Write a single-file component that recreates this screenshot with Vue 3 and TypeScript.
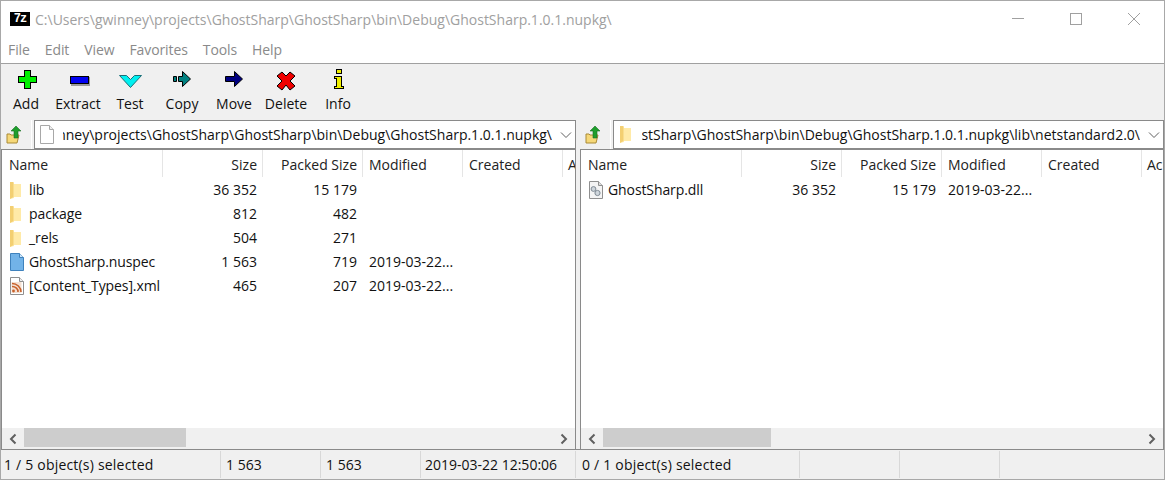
<script setup lang="ts">
interface Row {
  name: string
  icon: 'folder' | 'spec' | 'xml' | 'dll'
  size: string
  packed: string
  modified: string
}

interface Pane {
  id: string
  path: string
  pathIcon: 'page' | 'folder'
  rows: Row[]
  cut: string
}

const menus = ['File', 'Edit', 'View', 'Favorites', 'Tools', 'Help']
const tools = ['Add', 'Extract', 'Test', 'Copy', 'Move', 'Delete', 'Info']

const base = 'C:\\Users\\gwinney\\projects\\GhostSharp\\GhostSharp\\bin\\Debug\\GhostSharp.1.0.1.nupkg\\'

const panes: Pane[] = [
  {
    id: 'left',
    path: base,
    pathIcon: 'page',
    cut: 'A',
    rows: [
      { name: 'lib', icon: 'folder', size: '36 352', packed: '15 179', modified: '' },
      { name: 'package', icon: 'folder', size: '812', packed: '482', modified: '' },
      { name: '_rels', icon: 'folder', size: '504', packed: '271', modified: '' },
      { name: 'GhostSharp.nuspec', icon: 'spec', size: '1 563', packed: '719', modified: '2019-03-22...' },
      { name: '[Content_Types].xml', icon: 'xml', size: '465', packed: '207', modified: '2019-03-22...' },
    ],
  },
  {
    id: 'right',
    path: base + 'lib\\netstandard2.0\\',
    pathIcon: 'folder',
    cut: 'Ac',
    rows: [
      { name: 'GhostSharp.dll', icon: 'dll', size: '36 352', packed: '15 179', modified: '2019-03-22...' },
    ],
  },
]

const statusCells = [
  { text: '1 / 5 object(s) selected', width: 221 },
  { text: '1 563', width: 100 },
  { text: '1 563', width: 100 },
  { text: '2019-03-22 12:50:06', width: 155 },
  { text: '0 / 1 object(s) selected', width: 224 },
  { text: '', width: 100 },
  { text: '', width: 100 },
  { text: '', width: 165 },
]
</script>

<template>
  <div class="win">
    <div class="title">
      <span class="logo">7z</span>
      <span class="title-text">{{ base }}</span>
      <div class="caption">
        <svg width="12" height="12" viewBox="0 0 12 12"><path d="M0 5.500h12" stroke="#a0a0a0" fill="none" /></svg>
        <svg width="12" height="12" viewBox="0 0 12 12"><rect x=".5" y=".5" width="11" height="11" stroke="#a0a0a0" fill="none" /></svg>
        <svg width="12" height="12" viewBox="0 0 12 12"><path d="M0 0l12 12M12 0L0 12" stroke="#a0a0a0" fill="none" /></svg>
      </div>
    </div>

    <nav class="menu">
      <span v-for="m in menus" :key="m">{{ m }}</span>
    </nav>

    <div class="toolbar">
      <div v-for="t in tools" :key="t" class="tool">
        <svg width="24" height="24" viewBox="0 0 24 24" shape-rendering="crispEdges">
          <template v-if="t === 'Add'">
            <path d="M11 4h6v6h6v6h-6v6h-6v-6H5v-6h6z" fill="#9a9a9a" />
            <path d="M10.500 3.500h6v6h6v6h-6v6h-6v-6h-6v-6h6z" fill="#00f000" stroke="#000" />
          </template>
          <template v-else-if="t === 'Extract'">
            <rect x="5" y="10" width="19" height="9" fill="#9a9a9a" />
            <rect x="4.500" y="9.500" width="18" height="7" fill="#0000f0" stroke="#000" />
          </template>
          <template v-else-if="t === 'Test'">
            <path d="M1.500 8.500h7l4 4 4-4h7l-11 12z" fill="#00f0f0" stroke="#1c6f78" shape-rendering="auto" />
          </template>
          <template v-else-if="t === 'Copy'">
            <path d="M3.500 9.500h3v5h-3zM8.500 9.500h4v-5l8 7.500-8 7.500v-5h-4z" fill="#008080" stroke="#000" shape-rendering="auto" />
          </template>
          <template v-else-if="t === 'Move'">
            <path d="M3.500 9.500h9v-5l8 7.500-8 7.500v-5h-9z" fill="#000080" stroke="#000" shape-rendering="auto" />
          </template>
          <template v-else-if="t === 'Delete'">
            <path d="M8 5l4 4 4-4 5 4-5 5 5 5-5 4-4-5-4 5-5-4 5-5-5-5z" fill="#f00000" stroke="#000" shape-rendering="auto" />
          </template>
          <template v-else>
            <rect x="10.500" y="2.500" width="5" height="4" fill="#f0f000" stroke="#000" />
            <path d="M8.500 9.500h7v10h2v2h-9v-2h2v-8h-2z" fill="#f0f000" stroke="#000" />
          </template>
        </svg>
        <span>{{ t }}</span>
      </div>
    </div>

    <div class="panes">
      <section v-for="p in panes" :key="p.id" class="pane" :class="p.id">
        <div class="addr">
          <div class="up">
            <svg width="18" height="20" viewBox="0 0 18 20">
              <path d="M2 9h3l1 1h8l-2 8H2z" fill="#f6d878" stroke="#a98a36" />
              <path d="M9 13V6H6l5-5 5 5h-3v7z" fill="#1f9e2c" stroke="#1b6e24" stroke-width=".6" />
            </svg>
          </div>
          <div class="combo">
            <svg v-if="p.pathIcon === 'page'" class="combo-ico" width="14" height="19" viewBox="0 0 14 19">
              <path d="M.5.500h9l4 4v14H.5z" fill="#fff" stroke="#a8a8a8" />
              <path d="M9.500.500v4h4" fill="#eee" stroke="#a8a8a8" />
            </svg>
            <svg v-else class="combo-ico" width="14" height="19" viewBox="0 0 14 19">
              <path d="M1 1h3l1 2h7v13H5v1l-4 1z" fill="#ffeaa8" />
              <path d="M1 1h3.500v15L1 18z" fill="#f3cf72" />
            </svg>
            <div class="combo-text"><span>{{ p.path }}</span></div>
            <svg class="chev" width="12" height="8" viewBox="0 0 12 8"><path d="M1 1.500l5 5 5-5" stroke="#606060" fill="none" /></svg>
          </div>
        </div>

        <div class="list">
          <div class="head row">
            <div class="c name">Name</div>
            <div class="c num">Size</div>
            <div class="c num">Packed Size</div>
            <div class="c date">Modified</div>
            <div class="c date">Created</div>
            <div class="c cut">{{ p.cut }}</div>
          </div>
          <div class="body">
            <div v-for="r in p.rows" :key="r.name" class="row item">
              <div class="c name">
                <svg class="ico" width="16" height="18" viewBox="0 0 16 18">
                  <template v-if="r.icon === 'folder'">
                    <path d="M1 1h3l1 2h7v13H5v1l-4 1z" fill="#ffeaa8" />
                    <path d="M1 1h3.500v15L1 18z" fill="#f3cf72" />
                  </template>
                  <template v-else-if="r.icon === 'spec'">
                    <path d="M1.500.500h9l4 4v13h-13z" fill="#72b3e8" stroke="#3f82bd" />
                    <path d="M10.500.500v4h4" fill="#cfe6f8" stroke="#3f82bd" />
                  </template>
                  <template v-else-if="r.icon === 'xml'">
                    <path d="M1.500.500h9l4 4v13h-13z" fill="#fff" stroke="#8f8f8f" />
                    <path d="M10.500.500v4h4" fill="#eee" stroke="#8f8f8f" />
                    <rect x="2.500" y="5" width="10" height="11" fill="#f3e0d2" />
                    <circle cx="4.500" cy="14" r="1.400" fill="#c8602a" />
                    <path d="M3 9.500a6 5 0 0 1 6 5.500M3 6.500a9 8.500 0 0 1 9 8.500" fill="none" stroke="#c8602a" stroke-width="1.600" />
                  </template>
                  <template v-else>
                    <path d="M1.500.500h9l4 4v13h-13z" fill="#f4f4f4" stroke="#8f8f8f" />
                    <path d="M10.500.500v4h4" fill="#ddd" stroke="#8f8f8f" />
                    <circle cx="5.500" cy="8" r="2.400" fill="#cfd6dc" stroke="#7f8a94" />
                    <circle cx="9.500" cy="12" r="2.600" fill="#cfd6dc" stroke="#7f8a94" />
                  </template>
                </svg>
                <span>{{ r.name }}</span>
              </div>
              <div class="c num">{{ r.size }}</div>
              <div class="c num">{{ r.packed }}</div>
              <div class="c date">{{ r.modified }}</div>
              <div class="c date"></div>
              <div class="c cut"></div>
            </div>
          </div>
          <div class="hbar">
            <svg class="arr" width="10" height="12" viewBox="0 0 10 12"><path d="M7.500 1.500L3 6l4.500 4.500" stroke="#606060" stroke-width="2" fill="none" /></svg>
            <div class="thumb"></div>
            <svg class="arr" width="10" height="12" viewBox="0 0 10 12"><path d="M2.500 1.500L7 6l-4.500 4.500" stroke="#606060" stroke-width="2" fill="none" /></svg>
          </div>
        </div>
      </section>
    </div>

    <footer class="status">
      <div v-for="(s, i) in statusCells" :key="i" class="cell" :style="{ width: s.width + 'px' }">{{ s.text }}</div>
    </footer>
  </div>
</template>

<style scoped>
.win {
  width: 1165px;
  height: 480px;
  box-sizing: border-box;
  border: 1px solid #a8a8a8;
  background: #fff;
  display: flex;
  flex-direction: column;
  font-family: "Open Sans", "Noto Sans", sans-serif;
  font-size: 14px;
  color: #111;
  overflow: hidden;
}
.title {
  height: 29px;
  box-sizing: border-box;
  display: flex;
  align-items: center;
  padding-left: 9px;
  padding-top: 7px;
  flex: none;
}
.logo {
  width: 20px;
  height: 14px;
  background: #000;
  color: #fff;
  font: bold 12px/14px "Liberation Mono", monospace;
  text-align: center;
  letter-spacing: -1px;
  margin-right: 5px;
}
.title-text {
  color: #a0a0a0;
}
.caption {
  margin-left: auto;
  display: flex;
  gap: 46px;
  padding-right: 24px;
}
.menu {
  height: 34px;
  flex: none;
  display: flex;
  align-items: center;
  gap: 15px;
  padding: 6px 0 0 7px;
  box-sizing: border-box;
  color: #8a8a8a;
  letter-spacing: -.1px;
  border-bottom: 1px solid #a0a0a0;
}
.toolbar {
  height: 56px;
  flex: none;
  background: #f0f0f0;
  display: flex;
  margin-left: -1px;
}
.tool {
  width: 52px;
  display: flex;
  flex-direction: column;
  align-items: center;
  padding-top: 3px;
  line-height: 20px;
}
.tool svg {
  display: block;
  height: 24px;
  margin-bottom: 3px;
}
.panes {
  flex: 1;
  display: flex;
  gap: 4px;
  min-height: 0;
  background: #f0f0f0;
}
.pane {
  display: flex;
  flex-direction: column;
  min-width: 0;
}
.pane.left { width: 575px; }
.pane.right { width: 584px; }
.addr {
  height: 29px;
  flex: none;
  display: flex;
  gap: 2px;
}
.up {
  width: 31px;
  display: flex;
  align-items: center;
  justify-content: center;
  border-right: 1px solid #fff;
  padding-right: 5px;
  box-sizing: border-box;
}
.combo {
  flex: 1;
  min-width: 0;
  background: #fff;
  border: 1px solid #8a8a8a;
  display: flex;
  align-items: center;
  padding-left: 5px;
}
.combo-ico { flex: none; }
.combo-text {
  flex: 1;
  min-width: 0;
  margin: 0 8px 0 9px;
  overflow: hidden;
  display: flex;
  justify-content: flex-end;
  white-space: nowrap;
}
.chev {
  flex: none;
  margin-right: 3px;
}
.list {
  flex: 1;
  min-height: 0;
  display: flex;
  flex-direction: column;
  background: #fff;
  border: 1px solid #8a8a8a;
  border-bottom: 0;
}
.row {
  display: flex;
  white-space: nowrap;
}
.head {
  height: 28px;
  flex: none;
  color: #222;
}
.head .c {
  height: 27px;
  border-right: 1px solid #e5e5e5;
  line-height: 29px;
}
.head .cut { border-right: 0; }
.c {
  box-sizing: border-box;
  width: 100px;
  flex: none;
  overflow: hidden;
}
.c.name {
  width: 161px;
  padding-left: 7px;
}
.c.num {
  text-align: right;
  padding-right: 5px;
}
.item .c.num { padding-right: 6px; }
.c.date { padding-left: 6px; }
.c.cut {
  width: 13px;
  padding-left: 5px;
  flex: 1;
}
.body {
  flex: 1;
  min-height: 0;
  overflow: hidden;
}
.item {
  height: 24px;
  line-height: 24px;
}
.item .c.name {
  display: flex;
  align-items: center;
  gap: 4px;
  letter-spacing: -.1px;
}
.ico { flex: none; }
.hbar {
  height: 21px;
  flex: none;
  background: #f0f0f0;
  display: flex;
  align-items: center;
}
.arr {
  flex: none;
  margin: 0 6px;
}
.arr:last-child { margin-left: auto; }
.thumb {
  height: 19px;
  align-self: flex-start;
  background: #cdcdcd;
}
.left .thumb { width: 162px; }
.right .thumb { width: 168px; }
.status {
  height: 30px;
  flex: none;
  display: flex;
  background: #f0f0f0;
  border-top: 1px solid #8a8a8a;
  margin-left: -1px;
  box-sizing: border-box;
}
.cell {
  box-sizing: border-box;
  flex: none;
  padding-left: 5px;
  line-height: 28px;
  border-right: 1px solid #d8d8d8;
  margin: 1px 0;
  white-space: nowrap;
  overflow: hidden;
}
.cell:first-child {
  padding-left: 4px;
  letter-spacing: .2px;
}
.cell:nth-child(4) { padding-left: 4px; }
.cell:nth-child(5) {
  padding-left: 6px;
  letter-spacing: .2px;
}
.cell:last-child { border-right: 0; }
</style>

<style>
html, body { margin: 0; overflow: hidden; }
</style>
